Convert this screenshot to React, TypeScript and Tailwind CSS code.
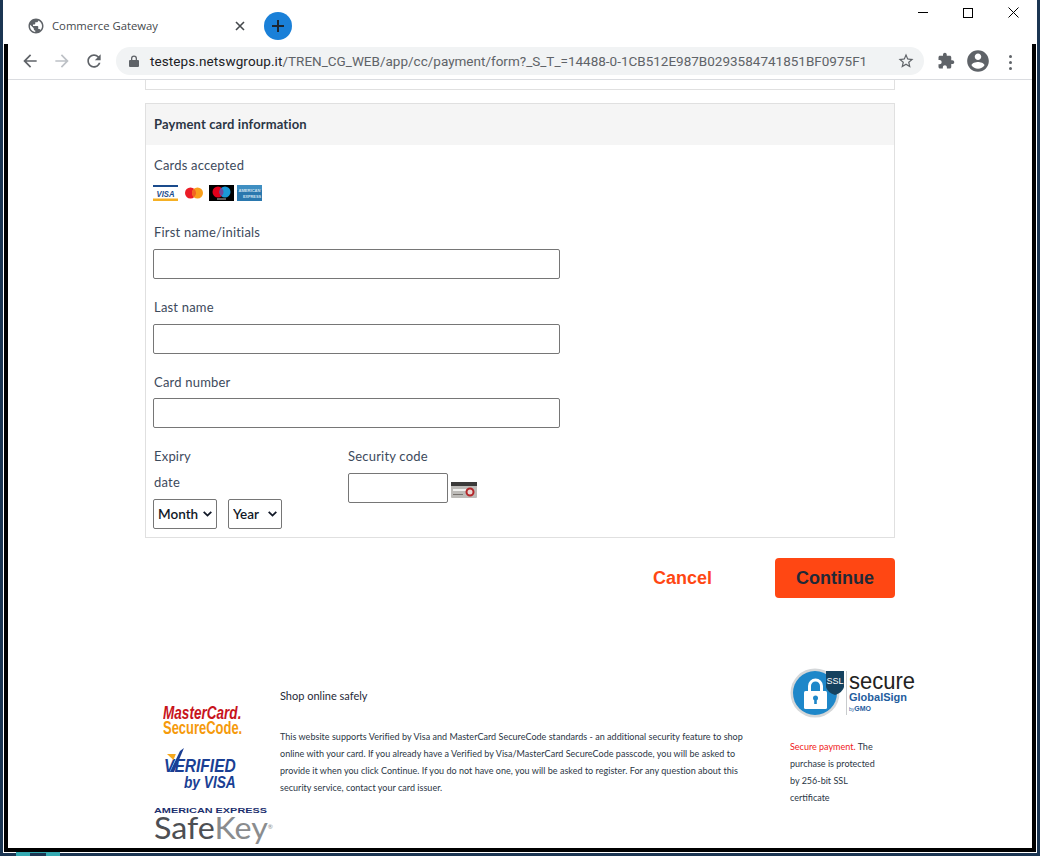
const pageFont = { fontFamily: '"Lato", "Noto Sans", sans-serif' };

function MaterialIcon({ d, size = 24, className = "" }: { d: string; size?: number; className?: string }) {
  return (
    <svg width={size} height={size} viewBox="0 0 24 24" className={className} fill="currentColor">
      <path d={d} />
    </svg>
  );
}

function Field({ label, first, tight }: { label: string; first?: boolean; tight?: boolean }) {
  return (
    <div className={first ? "mt-[22px]" : "mt-[19px]"}>
      <div className="h-[18px] pl-[1px] leading-[18px] text-[13px] text-[#3d4a5c] tracking-[0.2px]">{label}</div>
      <input className={`${tight ? "mt-[7px]" : "mt-[8px]"} block w-[407px] h-[30px] bg-white border border-[#767676] rounded-[2px]`} />
    </div>
  );
}

function SelectBox({ label, width }: { label: string; width: string }) {
  return (
    <div className={`relative ${width}`}>
      <select className="block h-[30px] w-full appearance-none rounded-[2px] border border-[#767676] bg-white pl-[4px] text-[13.5px] font-semibold text-[#111827]">
        <option>{label}</option>
      </select>
      <svg width="9" height="6" viewBox="0 0 9 6" className="pointer-events-none absolute right-[5px] top-[12px]" fill="none" stroke="#111827" strokeWidth="1.8">
        <path d="M0.7 0.8 L4.5 4.6 L8.3 0.8" />
      </svg>
    </div>
  );
}

function CardLogos() {
  return (
    <div className="mt-[10px] flex h-[16px]">
      <svg width="25" height="16" viewBox="0 0 25 16" className="block">
        <rect width="25" height="16" fill="#fff" />
        <rect width="25" height="2" fill="#1a4b8c" />
        <rect y="13.5" width="25" height="2.5" fill="#f5b024" />
        <text x="3.5" y="11.8" textLength="18" lengthAdjust="spacingAndGlyphs" fontFamily="Liberation Sans" fontWeight="700" fontStyle="italic" fontSize="9.5" fill="#1a4b8c">VISA</text>
      </svg>
      <svg width="20" height="16" viewBox="0 0 20 16" className="block ml-[6px]">
        <circle cx="6.5" cy="8" r="5.5" fill="#eb1c26" />
        <circle cx="13.5" cy="8" r="5.5" fill="#f99f1b" />
        <path d="M10 3.7a5.5 5.5 0 0 1 0 8.6a5.5 5.5 0 0 1 0-8.6z" fill="#f26522" />
      </svg>
      <svg width="25" height="16" viewBox="0 0 25 16" className="block ml-[5px]">
        <rect width="25" height="16" fill="#000" />
        <circle cx="9" cy="7" r="5.5" fill="#e2001a" />
        <circle cx="16" cy="7" r="5.5" fill="#1a9ad7" />
        <path d="M12.5 2.7a5.5 5.5 0 0 1 0 8.6a5.5 5.5 0 0 1 0-8.6z" fill="#6c4a9e" />
        <rect x="8" y="13.5" width="9" height="1" fill="#bbb" />
      </svg>
      <svg width="25" height="16" viewBox="0 0 25 16" className="block ml-[3px]">
        <rect width="25" height="16" fill="#2a78ae" />
        <rect y="0" width="25" height="5" fill="#3f8fc2" />
        <text x="1.5" y="7" textLength="22" lengthAdjust="spacingAndGlyphs" fontFamily="Liberation Sans" fontWeight="700" fontSize="4" fill="#cfe3f0">AMERICAN</text>
        <text x="6" y="12.5" textLength="18" lengthAdjust="spacingAndGlyphs" fontFamily="Liberation Sans" fontWeight="700" fontSize="4" fill="#cfe3f0">EXPRESS</text>
      </svg>
    </div>
  );
}

function MastercardSecure() {
  return (
    <svg width="80" height="30" viewBox="0 0 100 30" preserveAspectRatio="none" className="block ml-[18px]">
      <text x="0" y="14" textLength="98" lengthAdjust="spacingAndGlyphs" fontFamily="Liberation Sans" fontWeight="700" fontStyle="italic" fontSize="18" fill="#c8141c">MasterCard.</text>
      <text x="0" y="29" textLength="99" lengthAdjust="spacingAndGlyphs" fontFamily="Liberation Sans" fontWeight="700" fontSize="18" fill="#f59a0c">SecureCode.</text>
    </svg>
  );
}

function VerifiedVisa() {
  return (
    <svg width="74" height="42" viewBox="0 0 100 42" preserveAspectRatio="none" className="block mt-[13px] ml-[19px]">
      <text x="0" y="24" textLength="97" lengthAdjust="spacingAndGlyphs" fontFamily="Liberation Sans" fontWeight="700" fontStyle="italic" fontSize="19" fill="#1a3f94">VERIFIED</text>
      <path d="M8 24 L13.5 24 L27 0 L21.6 3 Z" fill="#1a3f94" />
      <path d="M4 6 L16 6 L12.8 12 Z" fill="#f5a81c" />
      <text x="27" y="40" textLength="70" lengthAdjust="spacingAndGlyphs" fontFamily="Liberation Sans" fontWeight="700" fontStyle="italic" fontSize="17" fill="#1a3f94">by VISA</text>
    </svg>
  );
}

function SafeKey() {
  return (
    <svg width="120" height="40" viewBox="0 0 120 40" className="block mt-[15px] ml-[9px]">
      <text x="0" y="8" textLength="113" lengthAdjust="spacingAndGlyphs" fontFamily="Liberation Sans" fontWeight="700" fontSize="7.5" fill="#1c2f6e">AMERICAN EXPRESS</text>
      <text x="0" y="34" textLength="119" lengthAdjust="spacingAndGlyphs" fontFamily="Lato" fontWeight="400" fontSize="31">
        <tspan fill="#4d4f53">Safe</tspan>
        <tspan fill="#8a8c8e">Key</tspan>
        <tspan dy="-10" fontSize="6" fill="#8a8c8e">®</tspan>
      </text>
    </svg>
  );
}

function GlobalSignLogo() {
  return (
    <svg width="126" height="50" viewBox="0 0 126 50" className="block mt-[8px]">
      <circle cx="25" cy="25" r="24.5" fill="#d4d7d9" />
      <circle cx="25" cy="25" r="22" fill="#1e87c9" />
      <path d="M18 24 v-6 a7.5 7.5 0 0 1 15 0 v6 h-3 v-6 a4.5 4.5 0 0 0 -9 0 v6 z" fill="#fff" />
      <rect x="14" y="23" width="23" height="18" rx="1.5" fill="#fff" />
      <circle cx="25.5" cy="30" r="2.5" fill="#1e87c9" />
      <rect x="24.2" y="30" width="2.6" height="6" fill="#1e87c9" />
      <path d="M36 3 L54 3 L54 19 Q53 24 45 27 Q37 24 36 19 Z" fill="#15425f" />
      <text x="45" y="16" textAnchor="middle" fontFamily="Liberation Sans" fontSize="9" fill="#fff">SSL</text>
      <rect x="56" y="3" width="1" height="44" fill="#c9ccce" />
      <text x="59" y="21" textLength="66" lengthAdjust="spacingAndGlyphs" fontFamily="Liberation Sans" fontSize="23" fill="#222">secure</text>
      <text x="59" y="33" textLength="58" lengthAdjust="spacingAndGlyphs" fontFamily="Liberation Sans" fontWeight="700" fontSize="11" fill="#1f5d9e">GlobalSign</text>
      <text x="59" y="43" fontFamily="Liberation Sans" fontWeight="700" fontSize="7" fill="#1f5d9e">
        <tspan fontSize="5" fontWeight="400">by</tspan>GMO
      </text>
    </svg>
  );
}

export default function App() {
  return (
    <div className="relative h-[856px] w-[1040px] overflow-hidden bg-[#1b3552] px-[3px] pb-[3px]">
      <svg width="46" height="4" viewBox="0 0 46 4" className="absolute left-[16px] bottom-0">
        <rect x="0" y="0" width="44" height="4" fill="#35aab2" />
        <rect x="14" y="1" width="16" height="3" fill="#1b3552" />
      </svg>
      <div className="flex h-full w-[1034px] flex-col bg-white">
        {/* tab strip */}
        <div className="flex h-[44px] shrink-0 items-start" style={{ fontFamily: '"Open Sans", sans-serif' }}>
          <MaterialIcon
            size={18}
            className="ml-[24px] mt-[17px] text-[#5f6368]"
            d="M12 2C6.48 2 2 6.48 2 12s4.48 10 10 10 10-4.48 10-10S17.52 2 12 2zm-1 17.93c-3.95-.49-7-3.85-7-7.93 0-.62.08-1.21.21-1.79L9 15v1c0 1.1.9 2 2 2v1.93zm6.9-2.54c-.26-.81-1-1.39-1.9-1.39h-1v-3c0-.55-.45-1-1-1H8v-2h2c.55 0 1-.45 1-1V7h2c1.1 0 2-.9 2-2v-.41c2.93 1.19 5 4.06 5 7.41 0 2.08-.8 3.97-2.1 5.39z"
          />
          <span className="ml-[7px] mt-[16px] w-[183px] text-[11.3px] leading-[20px] text-[#45494d]">Commerce Gateway</span>
          <svg width="10" height="10" viewBox="0 0 10 10" className="mt-[21px] text-[#45494d]" stroke="currentColor" strokeWidth="1.6">
            <path d="M1 1 L9 9 M9 1 L1 9" />
          </svg>
          <div className="ml-[19px] mt-[12px] flex h-[28px] w-[28px] items-center justify-center rounded-full bg-[#1a80d8]">
            <svg width="12" height="12" viewBox="0 0 12 12" stroke="#1c2530" strokeWidth="2">
              <path d="M6 0 V12 M0 6 H12" />
            </svg>
          </div>
          <div className="ml-auto mr-[18px] mt-[7px] flex items-center gap-[35px]">
            <div className="h-[1px] w-[10px] bg-black" />
            <div className="h-[10px] w-[10px] border border-black" />
            <svg width="11" height="11" viewBox="0 0 11 11" stroke="#000" strokeWidth="1">
              <path d="M0.5 0.5 L10.5 10.5 M10.5 0.5 L0.5 10.5" />
            </svg>
          </div>
        </div>

        {/* window body, black edge */}
        <div className="mx-[1px] mb-[1px] flex min-h-0 flex-1 flex-col border-x-4 border-b-4 border-black">
          <div className="flex h-[36px] shrink-0 items-start border-b border-[#dadce0]">
            <MaterialIcon size={20} className="ml-[12px] mt-[7px] text-[#5f6368]" d="M20 11H7.83l5.59-5.59L12 4l-8 8 8 8 1.41-1.41L7.83 13H20v-2z" />
            <MaterialIcon size={20} className="ml-[12px] mt-[7px] text-[#bdc1c6]" d="M12 4l-1.41 1.41L16.17 11H4v2h12.17l-5.58 5.59L12 20l8-8z" />
            <MaterialIcon size={20} className="ml-[12px] mt-[7px] text-[#5f6368]" d="M17.65 6.35C16.2 4.9 14.21 4 12 4c-4.42 0-7.99 3.58-7.99 8s3.57 8 7.99 8c3.73 0 6.84-2.55 7.73-6h-2.08c-.82 2.33-3.04 4-5.65 4-3.31 0-6-2.69-6-6s2.69-6 6-6c1.66 0 3.14.69 4.22 1.78L13 11h7V4l-2.35 2.35z" />
            <div className="ml-[12px] mt-[3px] flex h-[28px] w-[808px] items-center rounded-full bg-[#f1f3f4]">
              <svg width="10" height="12" viewBox="0 0 10 12" className="ml-[13px]" fill="#5f6368">
                <path d="M2 5V3.4a3 3 0 0 1 6 0V5H9a1 1 0 0 1 1 1v5a1 1 0 0 1-1 1H1a1 1 0 0 1-1-1V6a1 1 0 0 1 1-1zM3.3 5h3.4V3.4a1.7 1.7 0 0 0-3.4 0z" />
              </svg>
              <span className="ml-[11px] whitespace-nowrap text-[13.5px] text-[#5f6368]" style={{ fontFamily: "Roboto, sans-serif" }}>
                <span className="text-[#202124] tracking-[0.1px]">testeps.netswgroup.it</span>/TREN_CG_WEB/app/cc/payment/form?_S_T_=14488-0-1CB512E987B0293584741851BF0975F1
              </span>
              <MaterialIcon size={18} className="ml-auto mr-[9px] text-[#5f6368]" d="M22 9.24l-7.19-.62L12 2 9.19 8.63 2 9.24l5.46 4.73L5.82 21 12 17.27 18.18 21l-1.63-7.03L22 9.24zM12 15.4l-3.76 2.27 1-4.28-3.32-2.88 4.38-.38L12 6.1l1.71 4.04 4.38.38-3.32 2.88 1 4.28L12 15.4z" />
            </div>
            <MaterialIcon size={18} className="ml-[13px] mt-[8px] text-[#5f6368]" d="M20.5 11H19V7c0-1.1-.9-2-2-2h-4V3.5C13 2.12 11.88 1 10.5 1S8 2.12 8 3.5V5H4c-1.1 0-1.99.9-1.99 2v3.8H3.5c1.49 0 2.7 1.21 2.7 2.7s-1.21 2.7-2.7 2.7H2V20c0 1.1.9 2 2 2h3.8v-1.5c0-1.49 1.21-2.7 2.7-2.7 1.49 0 2.7 1.21 2.7 2.7V22H17c1.1 0 2-.9 2-2v-4h1.5c1.38 0 2.5-1.12 2.5-2.5S21.88 11 20.5 11z" />
            <MaterialIcon size={26} className="ml-[10px] mt-[4px] text-[#5f6368]" d="M12 2C6.48 2 2 6.48 2 12s4.48 10 10 10 10-4.48 10-10S17.52 2 12 2zm0 3c1.66 0 3 1.34 3 3s-1.34 3-3 3-3-1.34-3-3 1.34-3 3-3zm0 14.2c-2.5 0-4.71-1.28-6-3.22.03-1.99 4-3.08 6-3.08 1.99 0 5.97 1.09 6 3.08-1.29 1.94-3.5 3.22-6 3.22z" />
            <div className="ml-[18px] mt-[11px] flex flex-col gap-[3px]">
              <div className="h-[3px] w-[3px] rounded-full bg-[#5f6368]" />
              <div className="h-[3px] w-[3px] rounded-full bg-[#5f6368]" />
              <div className="h-[3px] w-[3px] rounded-full bg-[#5f6368]" />
            </div>
          </div>

          {/* page */}
          <div className="ml-[137px] w-[790px] min-h-0 flex-1 overflow-hidden" style={pageFont}>
            <div className="h-[10px] w-[750px] border-x border-b border-[#e0e0e0]" />

            <div className="mt-[13px] h-[435px] w-[750px] border border-[#e0e0e0]">
              <div className="flex h-[41px] items-center bg-[#f5f5f5] px-[8px] text-[13px] font-bold text-[#2b3645] tracking-[0.12px]">
                Payment card information
              </div>
              <div className="px-[7px] pt-[10px]">
                <div className="h-[20px] pl-[1px] text-[13px] leading-[20px] text-[#3d4a5c] tracking-[0.2px]">Cards accepted</div>
                <CardLogos />
                <Field first label="First name/initials" />
                <Field label="Last name" />
                <Field tight label="Card number" />
                <div className="mt-[19px] flex">
                  <div className="w-[195px]">
                    <div className="h-[18px] pl-[1px] text-[13px] leading-[18px] text-[#3d4a5c] tracking-[0.2px]">Expiry</div>
                    <div className="mt-[8px] h-[18px] pl-[1px] text-[13px] leading-[18px] text-[#3d4a5c] tracking-[0.2px]">date</div>
                    <div className="mt-[8px] flex gap-[11px]">
                      <SelectBox label="Month" width="w-[64px]" />
                      <SelectBox label="Year" width="w-[54px]" />
                    </div>
                  </div>
                  <div>
                    <div className="h-[18px] text-[13px] leading-[18px] text-[#3d4a5c] tracking-[0.2px]">Security code</div>
                    <div className="mt-[8px] flex items-start">
                      <input className="h-[30px] w-[100px] rounded-[2px] border border-[#767676] bg-white" />
                      <svg width="26" height="16" viewBox="0 0 26 16" className="ml-[3px] mt-[9px]">
                        <rect width="26" height="16" rx="1" fill="#bdbbb8" />
                        <rect width="26" height="4" fill="#3b3a3a" />
                        <rect x="2" y="7" width="13" height="2" fill="#f1f1ef" />
                        <rect x="2" y="12" width="10" height="1" fill="#77726e" />
                        <circle cx="19" cy="10" r="3.5" fill="#e9d6d2" stroke="#b3262a" strokeWidth="2" />
                      </svg>
                    </div>
                  </div>
                </div>
              </div>
            </div>

            <div className="mt-[20px] flex w-[750px] items-center justify-end gap-[63px]" style={{ fontFamily: '"Liberation Sans", sans-serif' }}>
              <span className="text-[18px] font-bold text-[#ff4713]">Cancel</span>
              <button className="h-[40px] w-[120px] rounded-[4px] bg-[#ff4713] text-[18px] font-bold text-[#1f2937]">Continue</button>
            </div>

            <div className="mt-[62px] flex">
              <div className="w-[135px] pt-[45px]">
                <MastercardSecure />
                <VerifiedVisa />
                <SafeKey />
              </div>
              <div className="w-[510px] pt-[27px]">
                <div className="text-[11px] leading-[17px] text-[#1f2937]">Shop online safely</div>
                <p className="mt-[24px] whitespace-nowrap text-[9px] tracking-[0.03px] leading-[17px] text-[#2b3645]">
                  This website supports Verified by Visa and MasterCard SecureCode standards - an additional security feature to shop<br />
                  online with your card. If you already have a Verified by Visa/MasterCard SecureCode passcode, you will be asked to<br />
                  provide it when you click Continue. If you do not have one, you will be asked to register. For any question about this<br />
                  security service, contact your card issuer.
                </p>
              </div>
              <div className="w-[126px]">
                <GlobalSignLogo />
                <p className="mt-[20px] w-[95px] text-[9px] leading-[17px] text-[#2b3645]">
                  <span className="text-[#f01a1a]">Secure payment.</span> The purchase is protected by 256-bit SSL certificate
                </p>
              </div>
            </div>
          </div>
        </div>
      </div>
    </div>
  );
}
